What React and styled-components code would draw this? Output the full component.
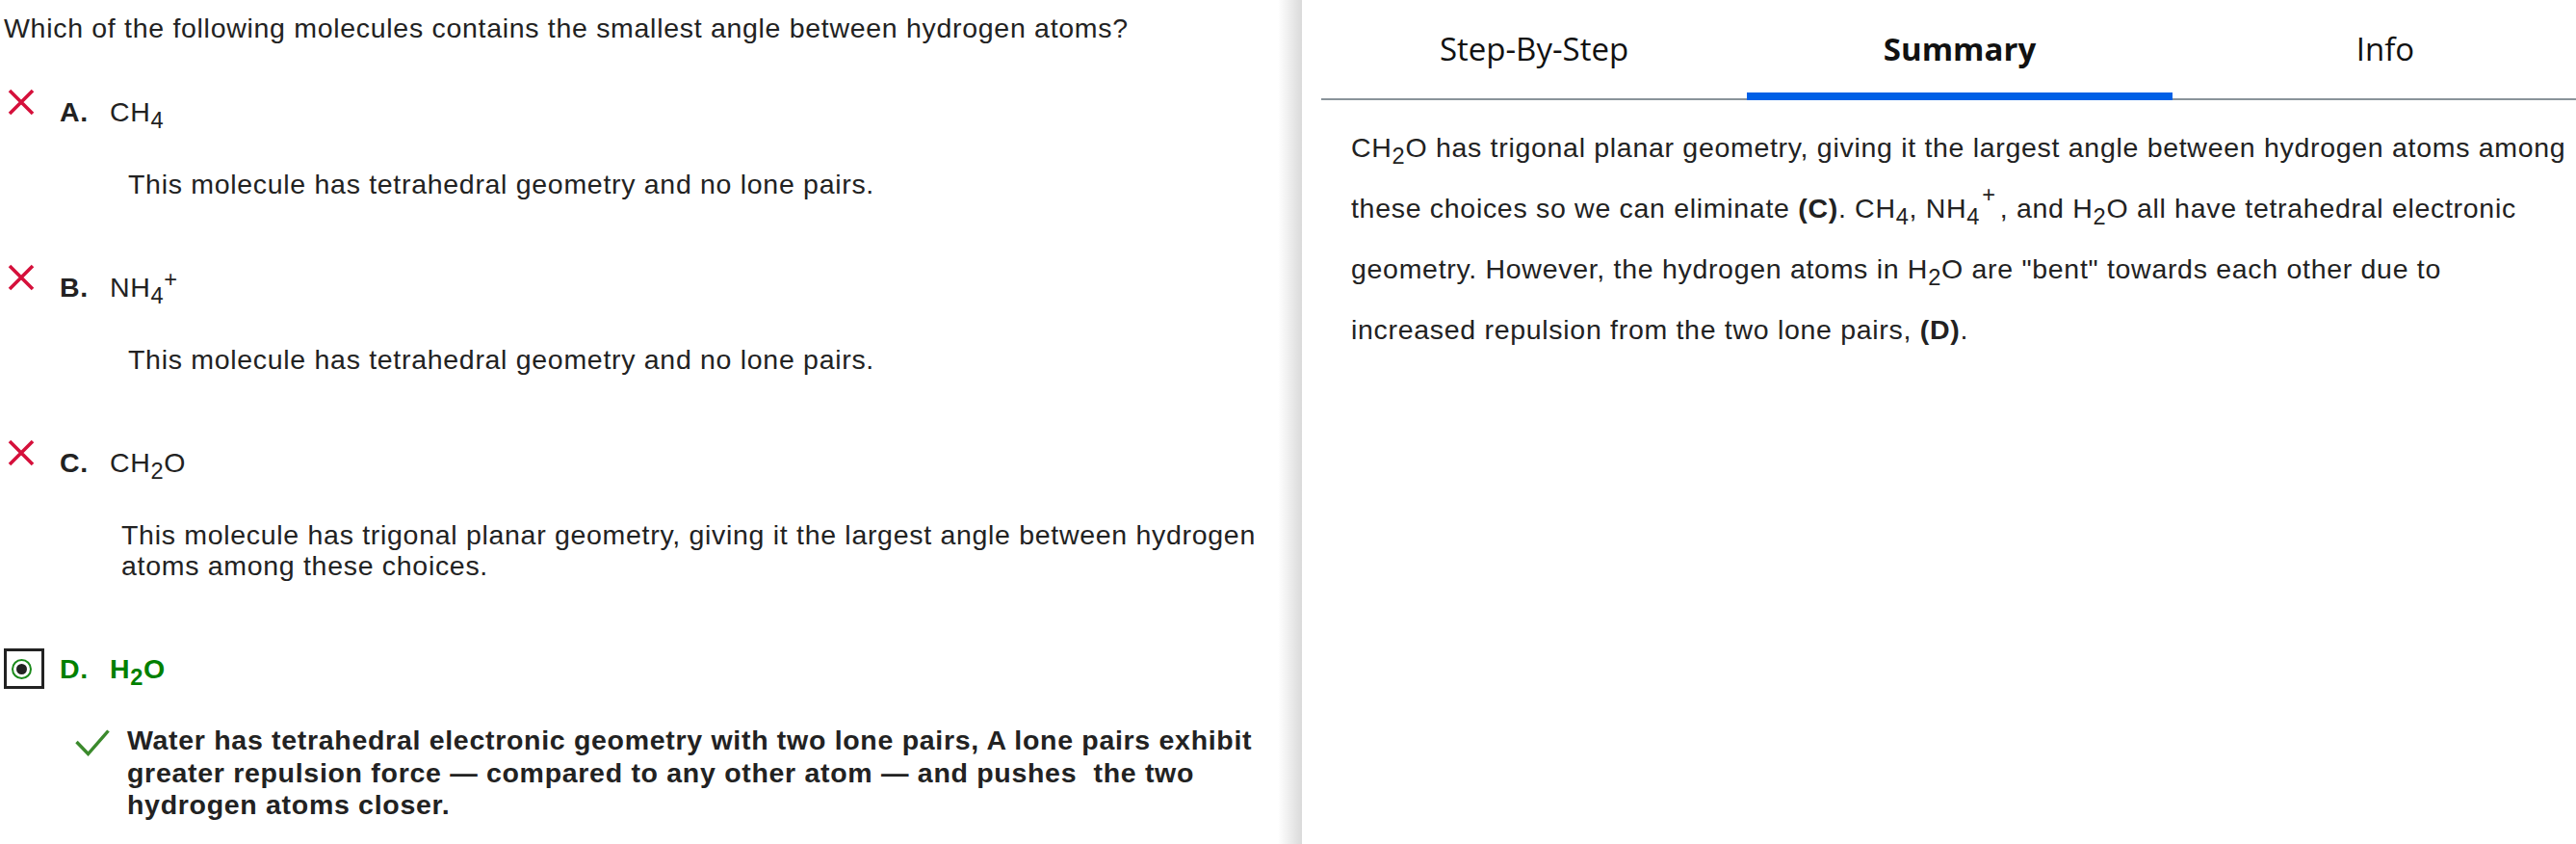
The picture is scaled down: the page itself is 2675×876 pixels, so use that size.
import React from 'react';
import styled, { createGlobalStyle } from 'styled-components';

const GlobalStyle = createGlobalStyle`
  html, body { margin: 0; padding: 0; background: #fff; overflow: hidden; }
  body { font-family: "Liberation Sans", Arial, sans-serif; color: #222; }
`;

const Page = styled.div`
  display: flex;
  width: 2675px;
  height: 876px;
  overflow: hidden;
`;

const QuestionPane = styled.section`
  flex: 0 0 1352px;
  box-sizing: border-box;
  padding: 14px 27px 0 4px;
  background: linear-gradient(to right, #fff calc(100% - 25px), #dadada);
  font-size: 28.5px;
  letter-spacing: 0.7px;
  line-height: 31px;
`;

const Question = styled.p`
  margin: 0;
`;

const OptionList = styled.div`
  display: flex;
  flex-direction: column;
  gap: 70px;
  margin-top: 50px;
`;

const Option = styled.div`
  display: flex;
  flex-direction: column;
`;

const OptionHeader = styled.div`
  display: flex;
  align-items: center;
  height: 42px;
  color: ${(p) => p.$color || '#222'};
`;

const MarkSlot = styled.div`
  flex: none;
  width: 58px;
  display: flex;
  align-items: center;
`;

const CrossMark = styled.svg`
  width: 28px;
  height: 28px;
  margin-left: 4px;
  margin-bottom: 20px;
`;

const RadioBox = styled.div`
  box-sizing: border-box;
  width: 42px;
  height: 42px;
  border: 3px solid #222;
  display: flex;
  align-items: center;
  padding-left: 5px;
`;

const RadioRing = styled.div`
  box-sizing: border-box;
  width: 21px;
  height: 21px;
  border-radius: 50%;
  border: 2px solid #1a8a1a;
  display: flex;
  align-items: center;
  justify-content: center;
`;

const RadioDot = styled.div`
  width: 11px;
  height: 11px;
  border-radius: 50%;
  background: #222;
`;

const Letter = styled.span`
  font-weight: 700;
  margin-right: 22px;
`;

const Formula = styled.span`
  font-weight: ${(p) => (p.$bold ? 700 : 400)};
`;

const Sub = styled.sub`
  font-size: 0.83em;
  line-height: 0;
  vertical-align: -6.5px;
`;

const Sup = styled.sup`
  font-size: 0.83em;
  line-height: 0;
  vertical-align: ${(p) => p.$raise || '10px'};
  margin: ${(p) => p.$space || '0'};
`;

const Explanation = styled.div`
  display: flex;
  align-items: flex-start;
  margin-top: ${(p) => p.$gap || 38}px;
  padding-left: ${(p) => p.$indent}px;
  line-height: ${(p) => p.$lh || '32px'};
  font-weight: ${(p) => (p.$bold ? 700 : 400)};
`;

const CheckMark = styled.svg`
  flex: none;
  width: 36px;
  height: 28px;
  margin-top: 5px;
  margin-right: 18px;
`;

const SolutionPane = styled.section`
  flex: 1 1 auto;
  min-width: 0;
  padding-left: 20px;
  background: #fff;
`;

const TabBar = styled.nav`
  display: flex;
  width: 1326px;
  height: 104px;
  box-sizing: border-box;
  border-bottom: 2px solid #89939a;
`;

const Tab = styled.div`
  flex: 1;
  box-sizing: border-box;
  height: 104px;
  margin-bottom: -2px;
  padding-top: 5px;
  display: flex;
  align-items: center;
  justify-content: center;
  border-bottom: 8px solid ${(p) => (p.$active ? '#0060e6' : 'transparent')};
  font-family: "Open Sans", "Noto Sans", sans-serif;
  font-size: 33px;
  font-weight: ${(p) => (p.$active ? 700 : 400)};
  color: #111;
`;

const Summary = styled.p`
  margin: 18px 0 0 0;
  padding-left: 31px;
  font-size: 28.5px;
  letter-spacing: 0.7px;
  line-height: 63px;
  white-space: nowrap;
  color: #222;
`;

const Cross = () => (
  <CrossMark viewBox="0 0 28 28">
    <path d="M2 2 L26 26 M26 2 L2 26" stroke="#d5103b" strokeWidth="3.6" fill="none" />
  </CrossMark>
);

const Check = () => (
  <CheckMark viewBox="0 0 36 28">
    <path d="M1.5 13 L13.5 25.5 L34.5 1.5" stroke="#3b8a2c" strokeWidth="3.4" fill="none" />
  </CheckMark>
);

const options = [
  {
    letter: 'A.',
    formula: <>CH<Sub>4</Sub></>,
    text: 'This molecule has tetrahedral geometry and no lone pairs.',
    indent: 129,
  },
  {
    letter: 'B.',
    formula: <>NH<Sub>4</Sub><Sup>+</Sup></>,
    text: 'This molecule has tetrahedral geometry and no lone pairs.',
    indent: 129,
  },
  {
    letter: 'C.',
    formula: <>CH<Sub>2</Sub>O</>,
    text: 'This molecule has trigonal planar geometry, giving it the largest angle between hydrogen atoms among these choices.',
    indent: 122,
  },
];

export default function App() {
  return (
    <>
      <GlobalStyle />
      <Page>
        <QuestionPane>
          <Question>Which of the following molecules contains the smallest angle between hydrogen atoms?</Question>
          <OptionList>
            {options.map((o) => (
              <Option key={o.letter}>
                <OptionHeader>
                  <MarkSlot><Cross /></MarkSlot>
                  <Letter>{o.letter}</Letter>
                  <Formula>{o.formula}</Formula>
                </OptionHeader>
                <Explanation $indent={o.indent}>{o.text}</Explanation>
              </Option>
            ))}
            <Option>
              <OptionHeader $color="#008000">
                <MarkSlot>
                  <RadioBox>
                    <RadioRing><RadioDot /></RadioRing>
                  </RadioBox>
                </MarkSlot>
                <Letter>D.</Letter>
                <Formula $bold>H<Sub>2</Sub>O</Formula>
              </OptionHeader>
              <Explanation $indent={74} $gap={37} $lh="33.5px" $bold>
                <Check />
                <span>
                  Water has tetrahedral electronic geometry with two lone pairs, A lone pairs exhibit greater repulsion force — compared to any other atom — and pushes{'\u00a0'} the two hydrogen atoms closer.
                </span>
              </Explanation>
            </Option>
          </OptionList>
        </QuestionPane>
        <SolutionPane>
          <TabBar>
            <Tab>Step-By-Step</Tab>
            <Tab $active>Summary</Tab>
            <Tab>Info</Tab>
          </TabBar>
          <Summary>
            CH<Sub>2</Sub>O has trigonal planar geometry, giving it the largest angle between hydrogen atoms among
            <br />
            these choices so we can eliminate <b>(C)</b>. CH<Sub>4</Sub>, NH<Sub>4</Sub><Sup $raise="16px" $space="0 4px 0 2px">+</Sup>, and H<Sub>2</Sub>O all have tetrahedral electronic
            <br />
            geometry. However, the hydrogen atoms in H<Sub>2</Sub>O are "bent" towards each other due to
            <br />
            increased repulsion from the two lone pairs, <b>(D)</b>.
          </Summary>
        </SolutionPane>
      </Page>
    </>
  );
}
